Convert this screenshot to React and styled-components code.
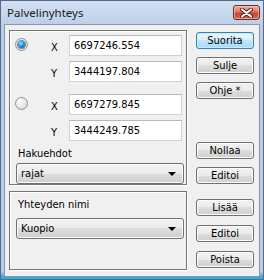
import React from "react";
import styled, { createGlobalStyle, css } from "styled-components";

const GlobalStyle = createGlobalStyle`
  html, body {
    margin: 0;
    padding: 0;
    background: #ffffff;
  }
  * {
    box-sizing: border-box;
  }
`;

const uiFont = `"DejaVu Sans Condensed", "Liberation Sans", sans-serif`;

const Window = styled.div`
  width: 264px;
  height: 280px;
  display: flex;
  flex-direction: column;
  background: linear-gradient(#d3e1f3, #bccfe8 24px, #bccfe8 270px, #3aa6de 276px, #3aa6de 278px, #1f4a6e);
  border: 1px solid #54688a;
  border-bottom: none;
  font-family: ${uiFont};
  font-size: 11px;
  color: #000;
`;

const TitleBar = styled.div`
  height: 23px;
  display: flex;
  align-items: center;
  justify-content: space-between;
  padding: 0 3px 0 6px;
`;

const Title = styled.span`
  font-family: "Noto Sans", "Liberation Sans", sans-serif;
  font-size: 11.5px;
  color: #1b1b1b;
`;

const CloseButton = styled.button`
  width: 27px;
  height: 15px;
  padding: 0;
  display: flex;
  align-items: center;
  justify-content: center;
  border: 1px solid #6e2a24;
  border-radius: 3px;
  background: linear-gradient(#eeb0a2, #dc7761 45%, #c8452d 55%, #d8664c);
  box-shadow: inset 0 0 0 1px rgba(255, 210, 200, 0.6);
`;

const Client = styled.div`
  flex: 1;
  margin: 0 3px 3px 3px;
  background: #f0f0f0;
  border: 1px solid #8796ad;
  padding: 5px 5px 5px 4px;
  display: flex;
  flex-direction: column;
  gap: 6px;
`;

const Section = styled.div`
  display: flex;
  gap: 9px;
`;

const Group = styled.div`
  width: 178px;
  height: ${(p) => p.$h}px;
  border: 1px solid #767676;
  box-shadow: inset 1px 1px 0 #ffffff, 1px 1px 0 #ffffff;
  padding: ${(p) => p.$pad};
  display: flex;
  flex-direction: column;
`;

const CoordBlock = styled.div`
  display: flex;
  flex-direction: column;
  gap: 5px;
  margin-bottom: ${(p) => p.$mb || 0}px;
`;

const CoordRow = styled.div`
  display: flex;
  align-items: center;
  height: 21px;
`;

const RadioCell = styled.div`
  width: 30px;
  height: 21px;
  display: flex;
  align-items: flex-start;
  padding-top: 3px;
`;

const Radio = styled.span`
  width: 13px;
  height: 13px;
  border-radius: 50%;
  border: 1px solid #8e8f8f;
  display: flex;
  align-items: center;
  justify-content: center;
  background: radial-gradient(circle at 35% 30%, #ffffff, #e6e6e6 55%, #cfcfcf);
  ${(p) =>
    p.$checked &&
    css`
      &::after {
        content: "";
        width: 7px;
        height: 7px;
        border-radius: 50%;
        background: radial-gradient(circle at 40% 35%, #a9e6fd, #2a8fd6 45%, #0d3d6e);
        box-shadow: 0 0 0 1px #5b8fbb;
      }
    `}
`;

const AxisLabel = styled.span`
  width: 24px;
  padding-left: 6px;
  padding-top: 4px;
`;

const TextField = styled.input`
  width: 113px;
  height: 21px;
  border: 1px solid #d2d2d2;
  border-top-color: #b9b9b9;
  background: #ffffff;
  padding: 0 4px;
  font-family: ${uiFont};
  font-size: 11px;
  color: #000;
  outline: none;
`;

const FieldLabel = styled.div`
  height: 14px;
  line-height: 14px;
  padding-left: 3px;
  margin-bottom: ${(p) => p.$mb || 0}px;
`;

const Combo = styled.div`
  width: 168px;
  height: 21px;
  margin-left: 1px;
  border: 1px solid #707070;
  border-radius: 3px;
  background: linear-gradient(#f2f2f2, #ebebeb 50%, #dddddd 50%, #cfcfcf);
  box-shadow: inset 0 0 0 1px #fbfbfb;
  display: flex;
  align-items: center;
  justify-content: space-between;
  padding: 0 7px 0 4px;
`;

const Arrow = styled.span`
  width: 0;
  height: 0;
  border-left: 4px solid transparent;
  border-right: 4px solid transparent;
  border-top: 4px solid #000;
`;

const ButtonColumn = styled.div`
  width: 58px;
  display: flex;
  flex-direction: column;
  justify-content: ${(p) => (p.$split ? "space-between" : "flex-start")};
  padding: ${(p) => p.$pad};
  gap: ${(p) => (p.$split ? 0 : 9)}px;
`;

const ButtonStack = styled.div`
  display: flex;
  flex-direction: column;
  gap: 8px;
`;

const Button = styled.button`
  width: 58px;
  height: 17px;
  padding: 0;
  border: 1px solid ${(p) => (p.$default ? "#3c7fb1" : "#707070")};
  border-radius: 3px;
  background: ${(p) =>
    p.$default
      ? "linear-gradient(#eaf6fd, #d9f0fc 50%, #bee6fd 50%, #a7d9f5)"
      : "linear-gradient(#f2f2f2, #ebebeb 50%, #dddddd 50%, #cfcfcf)"};
  box-shadow: inset 0 0 0 1px ${(p) => (p.$default ? "#c7ecfd" : "#fbfbfb")};
  font-family: ${uiFont};
  font-size: 11px;
  color: #000;
  line-height: 15px;
`;

const CloseIcon = () => (
  <svg width="13" height="10" viewBox="0 0 13 10">
    <path d="M2 1.5 L11 8.5 M11 1.5 L2 8.5" stroke="#5a2019" strokeWidth="4" strokeLinecap="round" />
    <path d="M2 1.5 L11 8.5 M11 1.5 L2 8.5" stroke="#ffffff" strokeWidth="2.2" strokeLinecap="round" />
  </svg>
);

const coords = [
  { checked: true, x: "6697246.554", y: "3444197.804" },
  { checked: false, x: "6697279.845", y: "3444249.785" },
];

export default function App() {
  return (
    <>
      <GlobalStyle />
      <Window>
        <TitleBar>
          <Title>Palvelinyhteys</Title>
          <CloseButton aria-label="Sulje">
            <CloseIcon />
          </CloseButton>
        </TitleBar>
        <Client>
          <Section>
            <Group $h={155} $pad="4px 4px 0 5px">
              {coords.map((c, i) => (
                <CoordBlock key={i} $mb={i === 0 ? 12 : 6}>
                  <CoordRow>
                    <RadioCell>
                      <Radio $checked={c.checked} />
                    </RadioCell>
                    <AxisLabel>X</AxisLabel>
                    <TextField readOnly defaultValue={c.x} />
                  </CoordRow>
                  <CoordRow>
                    <RadioCell />
                    <AxisLabel>Y</AxisLabel>
                    <TextField readOnly defaultValue={c.y} />
                  </CoordRow>
                </CoordBlock>
              ))}
              <FieldLabel $mb={2}>Hakuehdot</FieldLabel>
              <Combo>
                <span>rajat</span>
                <Arrow />
              </Combo>
            </Group>
            <ButtonColumn $split $pad="2px 0 1px 0">
              <ButtonStack>
                <Button $default>Suorita</Button>
                <Button>Sulje</Button>
                <Button>Ohje *</Button>
              </ButtonStack>
              <ButtonStack>
                <Button>Nollaa</Button>
                <Button>Editoi</Button>
              </ButtonStack>
            </ButtonColumn>
          </Section>
          <Section>
            <Group $h={79} $pad="6px 4px 0 5px">
              <FieldLabel $mb={6}>Yhteyden nimi</FieldLabel>
              <Combo>
                <span>Kuopio</span>
                <Arrow />
              </Combo>
            </Group>
            <ButtonColumn $pad="8px 0 0 0">
              <Button>Lisää</Button>
              <Button>Editoi</Button>
              <Button>Poista</Button>
            </ButtonColumn>
          </Section>
        </Client>
      </Window>
    </>
  );
}
